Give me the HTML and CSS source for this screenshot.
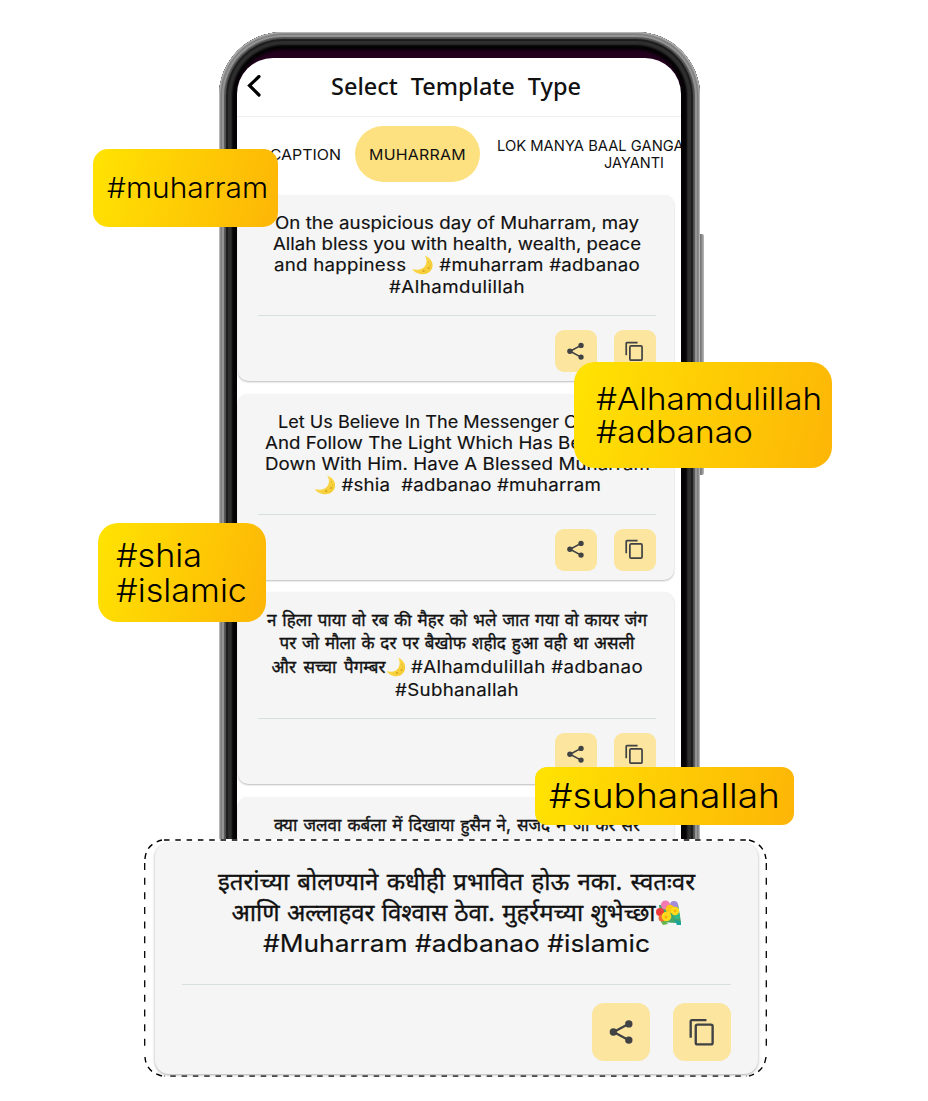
FILE: index.html
```html
<!DOCTYPE html>
<html lang="en">
<head>
<meta charset="utf-8">
<title>Select Template Type</title>
<link rel="stylesheet" href="styles.css">
</head>
<body>
<svg class="defs" width="0" height="0">
  <defs>
    <linearGradient id="moonFill" x1="0" y1="0" x2="1" y2="1"><stop offset="0" stop-color="#ffe05c"/><stop offset="1" stop-color="#f3c92c"/></linearGradient>
    <symbol id="moon" viewBox="0 0 20 20"><path d="M12 .8C17 2.600 20 7 19 12C18 17.500 13 20 8 19C4.500 18.400 2 16.500.6 14C6 16 11 14 12.800 10C14.200 6.800 13.800 3.500 12 .8Z" fill="url(#moonFill)"/><g fill="#d9a520"><circle cx="15.500" cy="13" r="1"/><circle cx="11" cy="16" r="1.100"/><circle cx="15.600" cy="7" r=".6"/><circle cx="16.800" cy="10" r=".5"/></g></symbol>
    <symbol id="bouquet" viewBox="0 0 26 26"><path d="M3 5L22 4L25 22L20 23L5 22Z" fill="#43a66a"/><path d="M18 19L25 22L25 25L21 25Z" fill="#1aa59b"/><path d="M5 22L8 19L12 24L7 25Z" fill="#63b64c"/><circle cx="9.500" cy="5" r="4.500" fill="#f27ab2"/><circle cx="18" cy="5" r="4" fill="#a58bd6"/><circle cx="4" cy="12" r="4" fill="#ed3b3b"/><circle cx="21" cy="16" r="3" fill="#31b98a"/><circle cx="6" cy="18" r="3.500" fill="#ef6d3b"/><circle cx="14" cy="9" r="4.300" fill="#ffc914"/><circle cx="19" cy="11" r="4.200" fill="#ffd91c"/><circle cx="10.500" cy="16.500" r="4.800" fill="#ffd91c"/><circle cx="10" cy="17" r="1.500" fill="#f4ad0c"/><circle cx="19" cy="11" r="1.300" fill="#f4ad0c"/></symbol>
    <symbol id="share" viewBox="0 0 24 24"><path d="M19 4.500L5 12L19 19.500" fill="none" stroke="#404244" stroke-width="2"/><g fill="#404244"><circle cx="18.500" cy="4.800" r="3.300"/><circle cx="4.800" cy="12" r="3.300"/><circle cx="18.500" cy="19.200" r="3.300"/></g></symbol>
    <symbol id="copy" viewBox="0 0 24 24"><path d="M1.500 17V2.500Q1.500 1.500 2.500 1.500H15.500" fill="none" stroke="#404244" stroke-width="2.100"/><rect x="6" y="5.500" width="15" height="17.500" rx="1.500" fill="none" stroke="#404244" stroke-width="2.100"/></symbol>
  </defs>
</svg>
<main class="stage">
  <section class="phone-wrap">
    <i class="side-button"></i>
    <div class="phone">
      <div class="screen">
        <header class="header">
          <svg class="back" viewBox="0 0 14 22"><path d="M12 1.500L2.500 10.500L12 20" fill="none" stroke="#000" stroke-width="3.200" stroke-linecap="round"/></svg>
          <h1><span data-w="250" data-mode="word">Select Template Type</span></h1>
        </header>
        <nav class="tabs">
          <span class="tab first"><span data-w="101">MY CAPTION</span></span>
          <span class="tab active"><span data-w="97">MUHARRAM</span></span>
          <span class="tab last"><span data-w="274">LOK MANYA BAAL GANGADHAR TILAK</span><br><span data-w="60">JAYANTI</span></span>
        </nav>
        <div class="list">
          <article class="card">
            <div class="copytext">
              <p><span data-w="364">On the auspicious day of Muharram, may</span></p>
              <p><span data-w="368">Allah bless you with health, wealth, peace</span></p>
              <p><span data-w="366">and happiness <svg class="emoji"><use href="#moon"/></svg> #muharram #adbanao</span></p>
              <p><span data-w="136">#Alhamdulillah</span></p>
            </div>
            <div class="actions"><b><svg><use href="#share"/></svg></b><b><svg><use href="#copy"/></svg></b></div>
          </article>
          <article class="card">
            <div class="copytext">
              <p><span data-w="359">Let Us Believe In The Messenger Of Allah,</span></p>
              <p><span data-w="384">And Follow The Light Which Has Been Sent</span></p>
              <p><span data-w="385">Down With Him. Have A Blessed Muharram</span></p>
              <p><span data-w="287"><svg class="emoji"><use href="#moon"/></svg> #shia&nbsp; #adbanao #muharram</span></p>
            </div>
            <div class="actions"><b><svg><use href="#share"/></svg></b><b><svg><use href="#copy"/></svg></b></div>
          </article>
          <article class="card hindi">
            <div class="copytext">
              <p><span data-w="380" data-mode="word">न हिला पाया वो रब की मैहर को भले जात गया वो कायर जंग</span></p>
              <p><span data-w="355" data-mode="word">पर जो मौला के दर पर बैखोफ शहीद हुआ वही था असली</span></p>
              <p class="mixed"><span data-w="134" data-mode="word">और सच्चा पैगम्बर<svg class="emoji"><use href="#moon"/></svg></span><span data-w="232">#Alhamdulillah #adbanao</span></p>
              <p><span data-w="124">#Subhanallah</span></p>
            </div>
            <div class="actions"><b><svg><use href="#share"/></svg></b><b><svg><use href="#copy"/></svg></b></div>
          </article>
          <article class="card hindi">
            <div class="copytext">
              <p><span data-w="366" data-mode="word">क्या जलवा कर्बला में दिखाया हुसैन ने, सजदे में जा कर सर</span></p>
            </div>
          </article>
        </div>
      </div>
    </div>
  </section>

  <section class="feature">
    <svg class="dashes" viewBox="0 0 623 238" fill="none" stroke="#000">
      <path d="M20 1H603" stroke-width="1.500" stroke-dasharray="5.500 5.800"/>
      <path d="M20 237H603" stroke-width="1.500" stroke-dasharray="5.500 5.800" stroke-dashoffset="5"/>
      <path d="M.7 24V214M622.300 24V214" stroke-width="1.300" stroke-dasharray="7 7.650"/>
      <path d="M1 20Q2 5 18 1M605 1Q620 5 622 20M622 218Q620 233 605 237M18 237Q2 233 1 218" stroke-width="1.400" stroke-dasharray="6 5"/>
    </svg>
    <article class="card big hindi">
      <div class="copytext">
        <p><span data-w="477" data-mode="word">इतरांच्या बोलण्याने कधीही प्रभावित होऊ नका. स्वतःवर</span></p>
        <p><span data-w="450" data-mode="word">आणि अल्लाहवर विश्वास ठेवा. मुहर्रमच्या शुभेच्छा<svg class="emoji"><use href="#bouquet"/></svg></span></p>
        <p><span data-w="387">#Muharram #adbanao #islamic</span></p>
      </div>
      <div class="actions"><b><svg><use href="#share"/></svg></b><b><svg><use href="#copy"/></svg></b></div>
    </article>
  </section>

  <div class="tag tag-muharram"><span data-w="161">#muharram</span></div>
  <div class="tag tag-alham"><span data-w="226">#Alhamdulillah</span><span data-w="157">#adbanao</span></div>
  <div class="tag tag-shia"><span data-w="86">#shia</span><span data-w="131">#islamic</span></div>
  <div class="tag tag-sub"><span data-w="231">#subhanallah</span></div>
</main>
<script src="fit.js"></script>
</body>
</html>
```

FILE: styles.css
```css
* { box-sizing: border-box; }
body { margin: 0; background: #fff; color: #111; font-family: Inter, "Noto Sans", "Noto Sans Devanagari", sans-serif; }
p, h1 { margin: 0; }
svg { display: block; }
.defs { position: absolute; }
.stage { position: relative; width: 928px; height: 1101px; overflow: hidden; padding-top: 32px; }
.stage [data-w] { display: inline-block; white-space: nowrap; }

.phone-wrap { position: relative; width: 486px; height: 807px; margin-left: 219px; overflow: hidden; }
.side-button { position: absolute; right: 1px; top: 202px; width: 6px; height: 241px; border-radius: 2px; background: linear-gradient(90deg, #555, #888 60%, #bbb); }
.phone {
  position: relative; width: 481px; height: 920px; padding: 26px 18px; border-radius: 64px; background: #050305;
  box-shadow: inset 0 0 2px 1px #ccc, inset 0 0 1px 3px #777, inset 0 0 1px 5px #999, inset 0 0 1px 7px #555, inset 0 0 1px 9px #1b1b1b, inset 0 0 2px 13px #303030, inset 0 0 3px 18px #050305, inset 0 12px 0 14px #24001f;
}
.screen { height: 880px; width: 444px; background: #fff; border-radius: 36px 36px 0 0; overflow: hidden; }
.header { display: flex; align-items: center; height: 59px; border-bottom: 1px solid #eee; padding-left: 10px; }
.back { width: 14px; height: 22px; margin-top: -3px; }
h1 { margin: -2px 0 0 70px; font: 500 23.500px/32px "Noto Sans", sans-serif; color: #111; }
.tabs { display: flex; align-items: center; height: 74px; padding-left: 3px; font-size: 14.5px; line-height: 17px; white-space: nowrap; }
.tab { flex: none; text-align: center; }
.tab.active { width: 125px; height: 56px; line-height: 57px; margin: -1px 0 0 14px; border-radius: 28px; background: #fde180; }
.tab.last { margin-left: 17px; width: 274px; }
.list { display: flex; flex-direction: column; gap: 12.500px; padding-top: 4px; }
.card { display: flex; flex-direction: column; flex: none; width: 436px; height: 186px; margin-left: 1px; padding: 17px 18px 0 20px; border-radius: 10px; background: #f5f5f5; box-shadow: 0 1px 2px #bbb; }
.copytext { height: 104px; border-bottom: 1px solid #d7e0e1; text-align: center; font-size: 17px; font-weight: 400; line-height: 22px; }
.copytext p { white-space: nowrap; display: flex; justify-content: center; height: 21.200px; }
.copytext [data-w] { -webkit-text-stroke: .15px #111; }
.copytext [data-mode] { -webkit-text-stroke: .35px #111; }
.copytext .mixed { gap: 5px; }
.emoji { display: inline-block; width: 20px; height: 20px; vertical-align: -4px; }
.actions { display: flex; justify-content: flex-end; gap: 17px; padding-top: 14px; }
.actions b { display: grid; place-items: center; width: 42px; height: 42px; border-radius: 9px; background: #fbe59f; }
.actions svg { width: 19.500px; height: 20.500px; }
.list .hindi { height: 192px; }
.hindi .copytext { height: 110px; }
.hindi .copytext p { height: 23.300px; line-height: 23.300px; }

.feature { position: relative; width: 623px; height: 238px; margin-left: 144px; padding: 4px 9px 0 11px; border-radius: 26px; background: #fff; }
.dashes { position: absolute; left: 0; top: 0; width: 623px; height: 238px; overflow: visible; }
.big { position: relative; width: 603px; height: 231px; margin: 0; padding: 23px 27px 0; border-radius: 14px; box-shadow: 0 1px 3px #aaa; }
.big .copytext { height: 119px; font-size: 24px; }
.big .copytext p { height: 31px; line-height: 31px; }
.big .emoji { width: 26px; height: 26px; vertical-align: -5px; }
.big .actions { gap: 23px; padding-top: 18px; }
.big .actions b { width: 58px; height: 58px; border-radius: 12px; }
.big .actions svg { width: 27px; height: 28px; }

.tag { position: absolute; display: flex; flex-direction: column; align-items: flex-start; justify-content: center; color: #000; font-weight: 300; background: linear-gradient(105deg, #ffe202 3%, #fdb606 98%); }
.tag-muharram { left: 93px; top: 149px; width: 185px; height: 78px; padding-left: 14px; border-radius: 15px; font-size: 28px; }
.tag-alham { left: 574px; top: 362px; width: 258px; height: 106px; padding-left: 22px; border-radius: 21px; font-size: 31px; line-height: 33px; }
.tag-shia { left: 98px; top: 523px; width: 168px; height: 99px; padding-left: 18px; border-radius: 20px; font-size: 32.500px; line-height: 35px; }
.tag-sub { left: 535px; top: 767px; width: 259px; height: 58px; padding: 0 0 2px 14px; border-radius: 12px; font-size: 34px; }
```

FILE: fit.js
```javascript
// Fits each line to its data-w width: Latin lines are widened and tracked,
// Devanagari lines only get their word gaps adjusted.
document.querySelectorAll('[data-w]').forEach(function (el) {
  var target = parseFloat(el.dataset.w);
  var byWord = el.dataset.mode === 'word';
  var prop = byWord ? 'wordSpacing' : 'letterSpacing';
  el.style[prop] = '0px';
  var base = el.getBoundingClientRect().width;
  el.style[prop] = '1px';
  var step = el.getBoundingClientRect().width - base;
  var scale = byWord ? 1 : Math.max(1, Math.min(1.1, target / base));
  el.style[prop] = ((target / scale - base) / step) + 'px';
  if (scale !== 1) {
    // The margin keeps the layout box equal to the drawn width.
    el.style.transformOrigin = '0 50%';
    el.style.transform = 'scaleX(' + scale + ')';
    el.style.marginRight = (target - target / scale) + 'px';
  }
});
```
